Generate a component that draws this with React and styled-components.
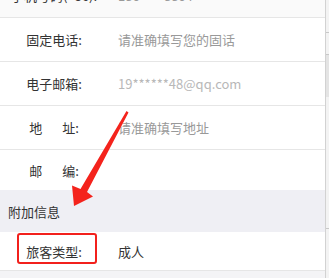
import React from 'react'
import styled, { createGlobalStyle } from 'styled-components'

const GlobalStyle = createGlobalStyle`
  html, body {
    margin: 0;
    padding: 0;
    background: #ffffff;
  }
  body {
    font-family: "Noto Sans CJK SC", "Noto Sans", sans-serif;
  }
`

const Page = styled.div`
  position: relative;
  display: flex;
  width: 329px;
  height: 278px;
  overflow: hidden;
  background: #ffffff;
`

const Content = styled.div`
  flex: 1;
  display: flex;
  flex-direction: column;
  overflow: hidden;
`

const List = styled.div`
  margin-top: -26px;
  display: flex;
  flex-direction: column;
`

const Row = styled.div`
  display: flex;
  align-items: center;
  height: ${p => p.$height || 43}px;
  flex-shrink: 0;
  background: ${p => p.$tint ? '#fafafa' : '#ffffff'};
  border-bottom: ${p => p.$last ? 'none' : '1px solid #e6e6e6'};
`

const Label = styled.div`
  position: relative;
  width: 108px;
  flex-shrink: 0;
  text-align: center;
  font-size: 13px;
  line-height: 19px;
  color: #333333;
  white-space: nowrap;

  ${p => p.$marked && `
    &::before {
      content: '';
      position: absolute;
      left: 17px;
      top: 50%;
      margin-top: -18px;
      width: 80px;
      height: 31px;
      box-sizing: border-box;
      border: 2.5px solid #f2201c;
      border-radius: 3px;
    }
  `}
`

const Spread = styled.span`
  display: inline-block;
  width: 20px;
`

const Value = styled.div`
  margin-left: 10px;
  font-size: 13px;
  line-height: 19px;
  color: ${p => p.$tone === 'filled' ? '#333333' : p.$tone === 'light' ? '#b8b8b8' : '#999999'};
  white-space: nowrap;
`

const SectionTitle = styled.div`
  display: flex;
  align-items: center;
  height: 42px;
  flex-shrink: 0;
  padding-left: 8px;
  background: #efeff4;
  font-size: 13px;
  color: #333333;
`

const Filler = styled.div`
  flex: 1;
  background: #f4f4f6;
`

const ScrollTrack = styled.div`
  position: relative;
  width: 3px;
  flex-shrink: 0;
  border-left: 1px solid #d2d2d2;
  background: #f3f3f3;
`

const Tick = styled.div`
  position: absolute;
  left: 0;
  top: ${p => p.$top}px;
  width: 3px;
  height: 1px;
  background: #c8c8c8;
`

const Thumb = styled.div`
  position: absolute;
  left: 0;
  top: 54px;
  width: 3px;
  height: 43px;
  background: #e4e4e4;
`

const ArrowLayer = styled.svg`
  position: absolute;
  left: 0;
  top: 0;
  pointer-events: none;
`

const rows = [
  { label: '手机号码(+86):', value: '186****8864', tone: 'placeholder', tint: true },
  { label: '固定电话:', value: '请准确填写您的固话', tone: 'placeholder' },
  { label: '电子邮箱:', value: '19******48@qq.com', tone: 'light' },
  { label: ['地', '址:'], value: '请准确填写地址', tone: 'placeholder' },
  { label: ['邮', '编:'], value: '', tone: 'placeholder', last: true, height: 40 }
]

const App = () => {
  return (
    <Page>
      <GlobalStyle />
      <Content>
        <List>
          {rows.map((row, i) => (
            <Row key={i} $last={row.last} $height={row.height} $tint={row.tint}>
              <Label>
                {Array.isArray(row.label)
                  ? <>{row.label[0]}<Spread />{row.label[1]}</>
                  : row.label}
              </Label>
              <Value $tone={row.tone}>{row.value}</Value>
            </Row>
          ))}
        </List>
        <SectionTitle>附加信息</SectionTitle>
        <Row $height={38}>
          <Label $marked>旅客类型:</Label>
          <Value $tone='filled'>成人</Value>
        </Row>
        <Filler />
      </Content>
      <ScrollTrack>
        <Tick $top={32} />
        <Thumb />
        <Tick $top={54} />
        <Tick $top={228} />
      </ScrollTrack>
      <ArrowLayer width='329' height='278' viewBox='0 0 329 278'>
        <polygon
          points='126.5,111 128.5,112.5 87,192 93,196.5 74,206 72,185.5 80.5,189'
          fill='#f4231c'
        />
      </ArrowLayer>
    </Page>
  )
}

export default App
